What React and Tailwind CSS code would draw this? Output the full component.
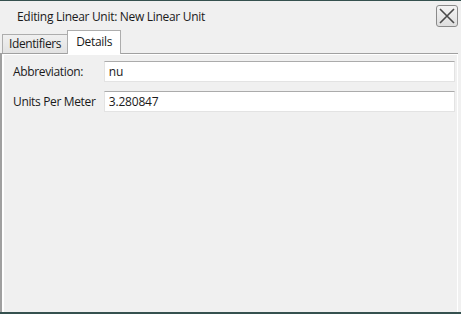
import { useState } from 'react';

export default function App() {
  const [abbr, setAbbr] = useState('nu');
  const [upm, setUpm] = useState('3.280847');

  return (
    <div className="w-[461px] h-[314px] bg-[#f0f0f0] border-t border-b-2 border-[#35514f] flex flex-col overflow-hidden text-[12px] text-[#1a1a1a] font-['Segoe_UI','Open_Sans',sans-serif]">

      {/* TITLE */}
      <div className="h-[28px] flex items-start justify-between pl-[17px] pr-[3px] pt-[4px]">
        <div className="pt-[4px] leading-[15px] tracking-[-0.3px]">Editing Linear Unit: New Linear Unit</div>
        <button className="w-[22px] h-[22px] rounded-[3px] border border-[#8a8a8a] bg-gradient-to-b from-[#f4f4f4] to-[#dedede] flex items-center justify-center">
          <svg width="18" height="18" viewBox="0 0 18 18">
            <path d="M2 2 L16 16 M16 2 L2 16" stroke="#4a4a4a" strokeWidth="1.6" fill="none" />
          </svg>
        </button>
      </div>

      {/* TABS */}
      <div className="h-[24px] flex items-end pl-[2px]">
        <div className="h-[19px] px-[6px] flex items-center border border-b-0 border-[#adadad] bg-gradient-to-b from-[#f0f0f0] to-[#e2e2e2] tracking-[-0.4px]">
          Identifiers
        </div>
        <div className="relative z-10 -mb-px h-[24px] px-[8px] pb-[2px] flex items-center border border-b-0 border-[#adadad] bg-white -ml-px tracking-[-0.3px]">
          Details
        </div>
      </div>

      {/* PANEL */}
      <div className="flex-1 mr-[3px] border-t border-l-2 border-[#a0a0a0]">
        <div className="h-full border-t border-l-2 border-r border-white flex flex-col gap-[9px] pt-[6px] pl-[9px] pr-[2px]">
          <div className="flex items-center">
            <div className="w-[91px] tracking-[-0.35px]">Abbreviation:</div>
            <input
              value={abbr}
              onChange={(e) => setAbbr(e.target.value)}
              className="w-[352px] h-[21px] px-[4px] bg-white border border-[#e3e3e3] border-t-[#ababab] outline-none tracking-[-0.2px]"
            />
          </div>
          <div className="flex items-center">
            <div className="w-[91px] tracking-[-0.35px]">Units Per Meter</div>
            <input
              value={upm}
              onChange={(e) => setUpm(e.target.value)}
              className="w-[352px] h-[21px] px-[4px] bg-white border border-[#e3e3e3] border-t-[#ababab] outline-none tracking-[-0.2px]"
            />
          </div>
        </div>
      </div>
    </div>
  );
}
